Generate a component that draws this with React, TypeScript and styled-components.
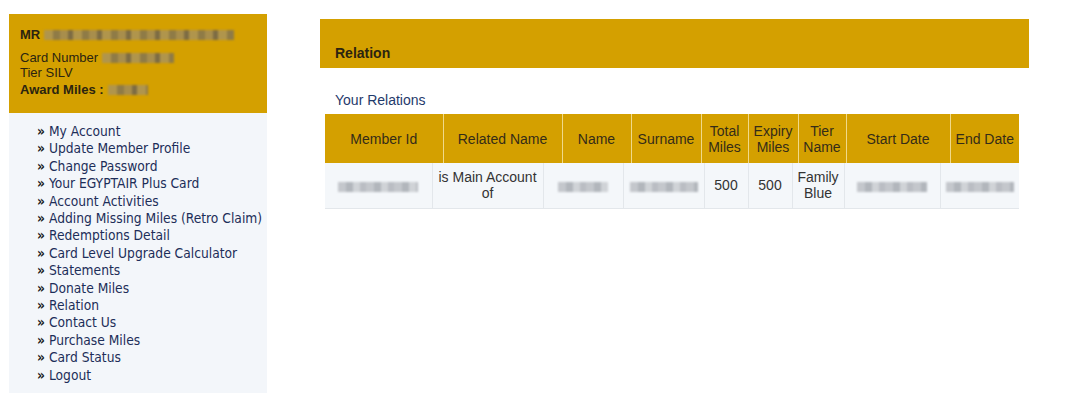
import { FC } from "react";
import styled, { createGlobalStyle } from "styled-components";

const GOLD = "#d4a000";

const GlobalStyle = createGlobalStyle`
  html, body {
    margin: 0;
    padding: 0;
    background: #fff;
  }
  body {
    font-family: "Liberation Sans", Arial, sans-serif;
    color: #333;
  }
`;

const menuItems = [
  "My Account",
  "Update Member Profile",
  "Change Password",
  "Your EGYPTAIR Plus Card",
  "Account Activities",
  "Adding Missing Miles (Retro Claim)",
  "Redemptions Detail",
  "Card Level Upgrade Calculator",
  "Statements",
  "Donate Miles",
  "Relation",
  "Contact Us",
  "Purchase Miles",
  "Card Status",
  "Logout",
];

const headCols = [
  { label: "Member Id", width: 118 },
  { label: "Related Name", width: 119 },
  { label: "Name", width: 69 },
  { label: "Surname", width: 70 },
  { label: "Total Miles", width: 47 },
  { label: "Expiry Miles", width: 50 },
  { label: "Tier Name", width: 48 },
  { label: "Start Date", width: 104 },
  { label: "End Date", width: 69 },
];

const bodyWidths = [107, 111, 80, 81, 44, 44, 52, 96, 79];

const App: FC = () => (
  <>
    <GlobalStyle />
    <Page>
      <Sidebar>
        <MemberCard>
          <MemberName>
            MR <Redacted $w={190} $tone="dark" />
          </MemberName>
          <MemberLine>
            Card Number <Redacted $w={72} $tone="dark" />
          </MemberLine>
          <MemberLine>Tier SILV</MemberLine>
          <AwardLine>
            Award Miles : <Redacted $w={40} $tone="dark" />
          </AwardLine>
        </MemberCard>
        <Menu>
          {menuItems.map((item) => (
            <MenuItem key={item}>
              <Raquo>»</Raquo>
              <MenuLink href="#">{item}</MenuLink>
            </MenuItem>
          ))}
        </Menu>
      </Sidebar>

      <Main>
        <SectionBar>Relation</SectionBar>
        <SubHeading>Your Relations</SubHeading>
        <Table>
          <colgroup>
            {headCols.map((c) => (
              <col key={c.label} style={{ width: c.width }} />
            ))}
          </colgroup>
          <thead>
            <tr>
              {headCols.map((c) => (
                <HeadCell key={c.label}>{c.label}</HeadCell>
              ))}
            </tr>
          </thead>
        </Table>
        <Table>
          <colgroup>
            {bodyWidths.map((w, i) => (
              <col key={i} style={{ width: w }} />
            ))}
          </colgroup>
          <tbody>
            <tr>
              <BodyCell>
                <Redacted $w={80} />
              </BodyCell>
              <BodyCell>is Main Account of</BodyCell>
              <BodyCell>
                <Redacted $w={50} />
              </BodyCell>
              <BodyCell>
                <Redacted $w={68} />
              </BodyCell>
              <BodyCell>500</BodyCell>
              <BodyCell>500</BodyCell>
              <BodyCell>Family Blue</BodyCell>
              <BodyCell>
                <Redacted $w={70} />
              </BodyCell>
              <BodyCell>
                <Redacted $w={68} />
              </BodyCell>
            </tr>
          </tbody>
        </Table>
      </Main>
    </Page>
  </>
);

export default App;

const Page = styled.div`
  display: flex;
  align-items: flex-start;
  gap: 53px;
  padding: 14px 0 0 9px;
`;

const Sidebar = styled.aside`
  width: 258px;
  flex-shrink: 0;
`;

const MemberCard = styled.div`
  background: ${GOLD};
  height: 99px;
  box-sizing: border-box;
  padding: 13px 11px 0;
  font-size: 13px;
  color: #2b2410;
`;

const MemberName = styled.div`
  font-weight: bold;
  line-height: 16px;
  margin-bottom: 7px;
  display: flex;
  align-items: center;
  gap: 4px;
`;

const MemberLine = styled.div`
  line-height: 15px;
  display: flex;
  align-items: center;
  gap: 4px;
`;

const AwardLine = styled(MemberLine)`
  font-weight: bold;
  line-height: 18px;
  margin-top: 1px;
`;

const Redacted = styled.span<{ $w: number; $tone?: "dark" }>`
  display: inline-block;
  width: ${(p) => p.$w}px;
  height: 10px;
  background: ${(p) =>
    p.$tone === "dark"
      ? "repeating-linear-gradient(90deg, #b0954c 0 9px, #8f7b46 9px 16px, #a88e4c 16px 24px, #7d6c43 24px 29px)"
      : "repeating-linear-gradient(90deg, #c4c7cc 0 8px, #b2b6bc 8px 15px, #d0d3d7 15px 22px, #babdc3 22px 28px)"};
  filter: blur(0.8px);
  vertical-align: middle;
`;

const Menu = styled.ul`
  list-style: none;
  margin: 0;
  background: #f3f6fa;
  height: 280px;
  box-sizing: border-box;
  padding: 10px 0 0 28px;
  font-family: "DejaVu Sans Condensed", "DejaVu Sans", Tahoma, sans-serif;
  font-size: 13.7px;
`;

const MenuItem = styled.li`
  display: flex;
  align-items: center;
  gap: 4px;
  line-height: 17.4px;
  white-space: nowrap;
`;

const Raquo = styled.span`
  font-weight: bold;
  color: #1a1a1a;
`;

const MenuLink = styled.a`
  color: #1d2e59;
  text-decoration: none;
`;

const Main = styled.main`
  width: 709px;
  padding-top: 5px;
`;

const SectionBar = styled.div`
  background: ${GOLD};
  height: 49px;
  box-sizing: border-box;
  padding: 26px 15px 0;
  font-size: 14px;
  line-height: 16px;
  font-weight: bold;
  color: #2b2410;
`;

const SubHeading = styled.div`
  color: #1f3a6b;
  font-size: 14px;
  line-height: 16px;
  margin: 24px 0 6px 15px;
`;

const Table = styled.table`
  table-layout: fixed;
  border-collapse: collapse;
  width: 694px;
  margin-left: 5px;
`;

const HeadCell = styled.th`
  background: ${GOLD};
  color: #342c18;
  font-weight: normal;
  font-size: 14px;
  line-height: 16px;
  height: 49px;
  padding: 0 1px;
  text-align: center;
  border-left: 1px solid #f0d98a;
  &:first-child {
    border-left: none;
  }
`;

const BodyCell = styled.td`
  background: #f4f7fa;
  color: #333;
  font-size: 14px;
  line-height: 16px;
  height: 45px;
  padding: 0 2px;
  text-align: center;
  border-left: 1px solid #e3e7eb;
  border-bottom: 1px solid #e3e7eb;
  box-sizing: border-box;
  &:first-child {
    border-left: none;
  }
`;
